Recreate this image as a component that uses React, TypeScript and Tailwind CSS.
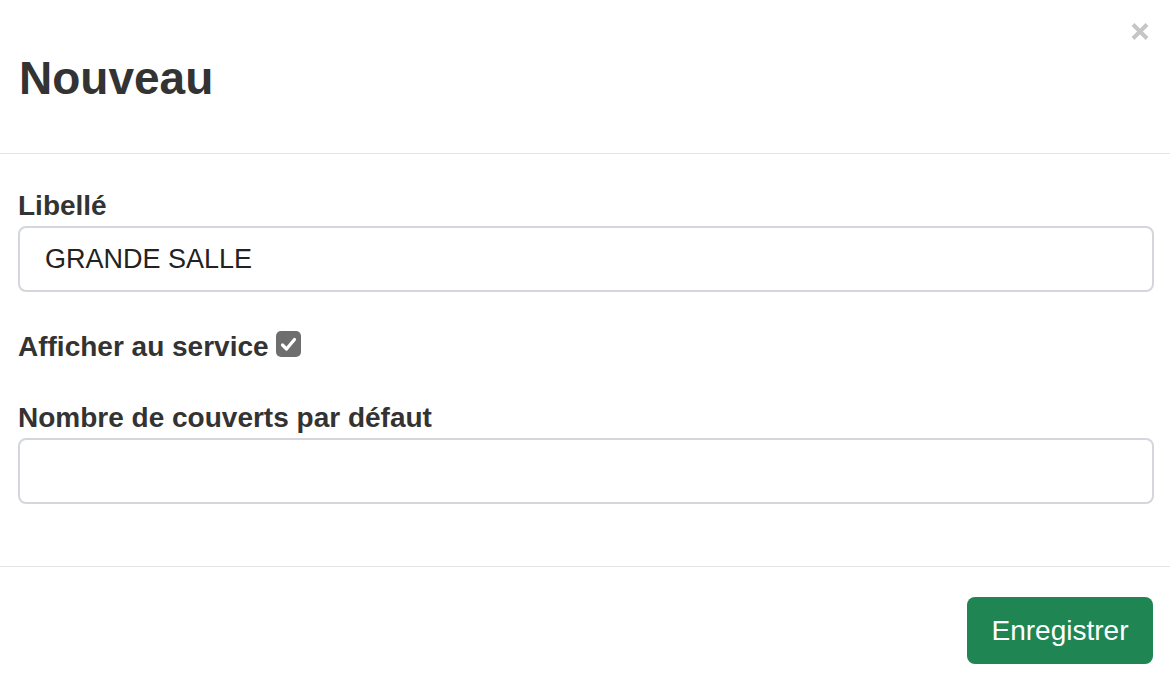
import { useState } from 'react';

function CloseIcon() {
  return (
    <svg width="18" height="19" viewBox="0 0 18 19" fill="none">
      <path d="M2 2.5 L16 16.5 M16 2.5 L2 16.5" stroke="#c6c6c6" strokeWidth="4" strokeLinecap="butt" />
    </svg>
  );
}

function CheckBox({ checked }: { checked: boolean }) {
  return (
    <div className="w-[25px] h-[26px] rounded-[5px] bg-[#6e6e6e] flex items-center justify-center flex-shrink-0">
      {checked && (
        <svg width="17" height="15" viewBox="0 0 17 15" fill="none">
          <path d="M2.5 8 L6.5 12 L14.5 2.5" stroke="#ffffff" strokeWidth="3.2" strokeLinecap="round" strokeLinejoin="round" />
        </svg>
      )}
    </div>
  );
}

export default function App() {
  const [libelle, setLibelle] = useState('GRANDE SALLE');
  const [couverts, setCouverts] = useState('');

  return (
    <div className="w-[1170px] h-[680px] bg-white flex flex-col" style={{ fontFamily: '"Liberation Sans", Arial, sans-serif' }}>
      {/* Header */}
      <div className="h-[154px] flex justify-between items-start pl-[19px] pr-[21px] pt-[22px] border-b border-[#e5e5e5] flex-shrink-0">
        <h4 className="mt-[33px] text-[46px] leading-[46px] font-bold text-[#333333]">Nouveau</h4>
        <button className="p-0">
          <CloseIcon />
        </button>
      </div>

      {/* Body */}
      <div className="flex flex-col pl-[18px] pr-[16px] pt-[38px] pb-[62px] border-b border-[#e5e5e5]">
        <label className="text-[28px] leading-[28px] font-bold text-[#333333] mb-[6px]">Libellé</label>
        <input
          type="text"
          value={libelle}
          onChange={(e) => setLibelle(e.target.value)}
          className="h-[66px] w-full border-2 border-[#d3d7dc] rounded-[8px] px-[25px] text-[27px] text-[#222222] outline-none"
        />

        <div className="flex items-start gap-[7px] mt-[39px]">
          <span className="mt-[2px] text-[28px] leading-[28px] font-bold text-[#333333]">Afficher au service</span>
          <CheckBox checked={true} />
        </div>

        <label className="text-[28px] leading-[28px] font-bold text-[#333333] mt-[43px] mb-[6px]">Nombre de couverts par défaut</label>
        <input
          type="text"
          value={couverts}
          onChange={(e) => setCouverts(e.target.value)}
          className="h-[66px] w-full border-2 border-[#d3d7dc] rounded-[8px] px-[25px] text-[27px] text-[#222222] outline-none"
        />
      </div>

      {/* Footer */}
      <div className="flex justify-end pt-[30px] pr-[17px]">
        <button className="w-[186px] h-[67px] rounded-[8px] bg-[#1e8553] text-white text-[28px]">Enregistrer</button>
      </div>
    </div>
  );
}
